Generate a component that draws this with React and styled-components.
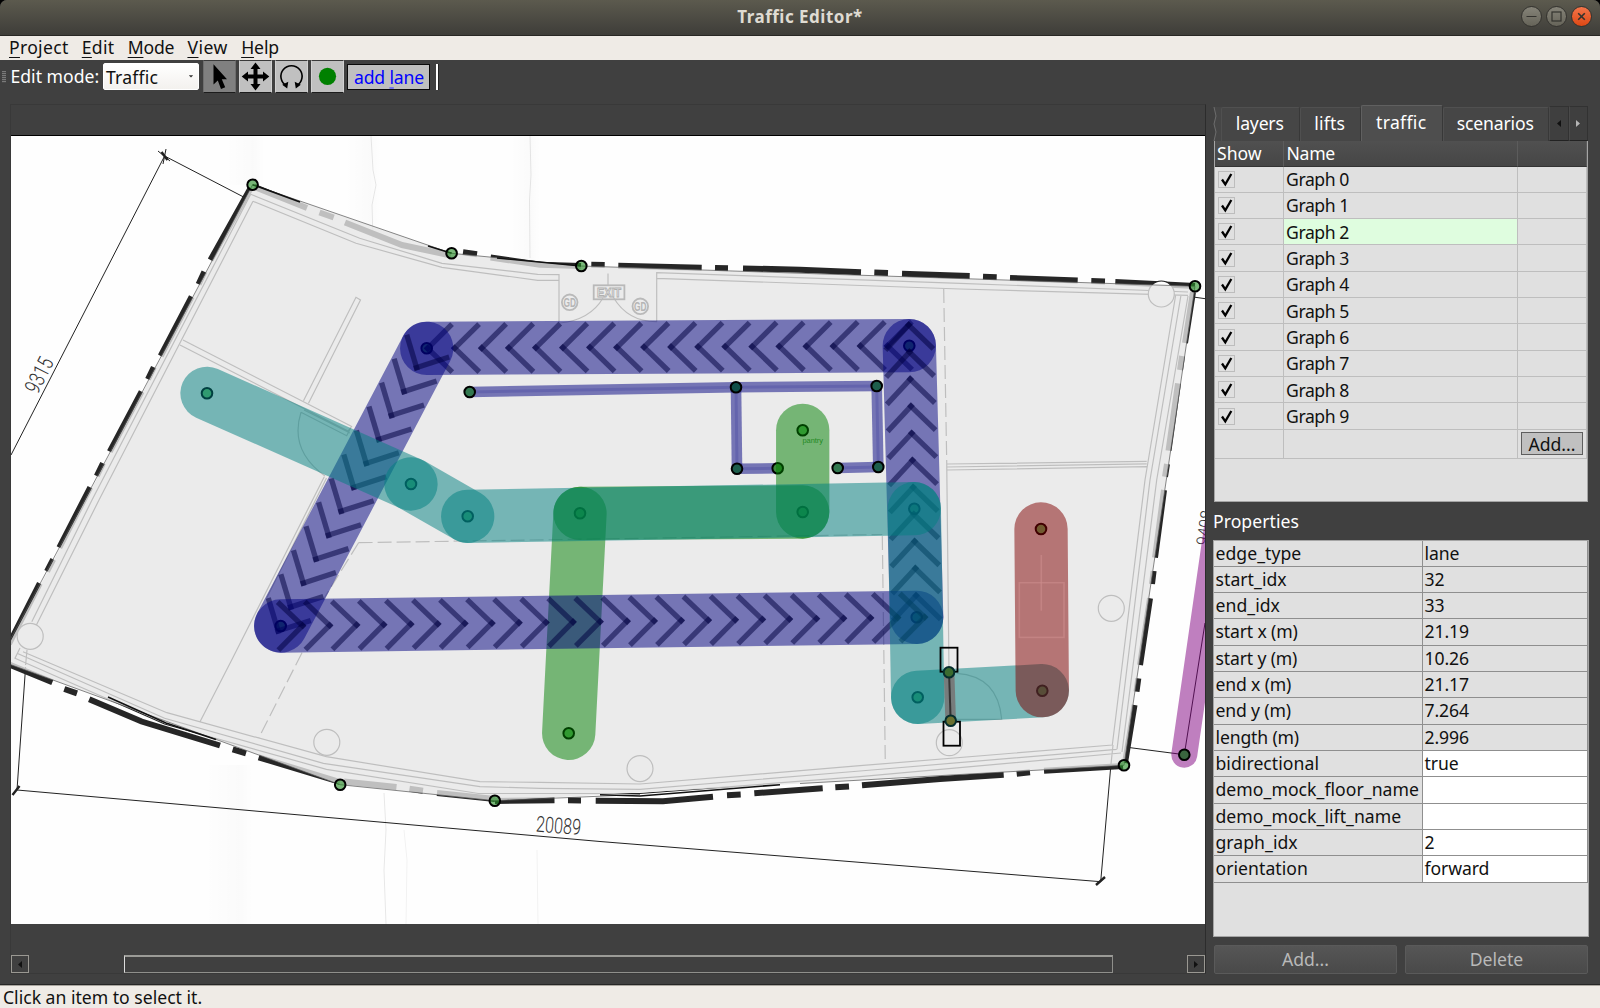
import React from "react";
import styled, { createGlobalStyle } from "styled-components";

const GlobalStyle = createGlobalStyle`
  * { box-sizing: border-box; }
  body { margin: 0; background: #000; overflow: hidden; }
`;

/* ---------- window frame ---------- */

const Window = styled.div`
  width: 1600px;
  height: 1008px;
  display: flex;
  flex-direction: column;
  overflow: hidden;
  border-radius: 7px 7px 0 0;
  background: #404040;
  color: #fff;
  font-family: "Noto Sans", "Open Sans", sans-serif;
  font-size: 17.6px;
  line-height: 24px;
  white-space: nowrap;
`;

const Text = styled.span`
  letter-spacing: ${(p) => p.$ls || 0}px;
`;

const TitleBar = styled.header`
  height: 36px;
  flex: none;
  display: grid;
  grid-template-columns: 1fr auto 1fr;
  align-items: center;
  padding: 0 8px 2px 8px;
  background: linear-gradient(#5c5a4e, #3e3d39);
  border-bottom: 1px solid #282724;
`;

const Title = styled.h1`
  grid-column: 2;
  margin: 0;
  font-size: 17px;
  line-height: 24px;
  font-weight: 700;
  color: #dfdbd2;
  letter-spacing: 0.5px;
`;

const WindowButtons = styled.div`
  display: flex;
  justify-content: flex-end;
  gap: 4px;
`;

const WindowButton = styled.button`
  width: 21px;
  height: 21px;
  padding: 0;
  border: 1px solid #34332f;
  border-radius: 50%;
  display: flex;
  align-items: center;
  justify-content: center;
  background: ${(p) => (p.$close ? "linear-gradient(#f4754a, #dd4814)" : "linear-gradient(#858378, #666459)")};
`;

const MenuBar = styled.nav`
  height: 24px;
  flex: none;
  display: flex;
  gap: 13.2px;
  padding-left: 9px;
  background: #efebe6;
  color: #111;
`;

const MenuItem = styled.div`
  line-height: 22.5px;
  letter-spacing: ${(p) => p.$ls || 0}px;
  &::first-letter {
    text-decoration: underline;
    text-decoration-thickness: 1px;
    text-underline-offset: 3px;
  }
`;

const StatusBar = styled.footer`
  height: 23px;
  flex: none;
  display: flex;
  align-items: center;
  justify-content: space-between;
  padding-left: 3px;
  border-top: 1px solid #aaa69f;
  background: #efebe6;
  color: #111;
`;

/* ---------- toolbar ---------- */

const ToolBar = styled.div`
  height: 44px;
  flex: none;
  display: flex;
  align-items: flex-start;
  padding-left: 2px;
`;

const Grip = styled.div`
  width: 4px;
  height: 12px;
  margin-top: 11px;
  background: repeating-linear-gradient(#7a7a7a 0 1px, #4a4a4a 1px 2px);
`;

const ModeLabel = styled.label`
  width: 97px;
  padding: 4px 0 0 4.5px;
`;

const Combo = styled.div`
  width: 96px;
  height: 27px;
  margin-top: 3px;
  padding: 0 4px 0 2px;
  display: flex;
  align-items: center;
  justify-content: space-between;
  border: 1px solid #fff;
  border-radius: 2px;
  background: linear-gradient(#fff, #f3f1ee);
  color: #111;
`;

const Tools = styled.div`
  display: flex;
  gap: 3.3px;
  margin-left: 3.6px;
`;

const ToolButton = styled.button`
  width: 33px;
  height: 33px;
  padding: 0;
  display: flex;
  align-items: center;
  justify-content: center;
  border: 1px solid ${(p) => (p.$on ? "#6e6e6e" : "#d2d2d2")};
  border-bottom-color: #1c1c1c;
  border-top-color: #3a3a3a;
  background: ${(p) => (p.$on ? "#808080" : "#c0c0c0")};
`;

const LaneButton = styled.button`
  width: 83px;
  height: 26px;
  margin: 4px 0 0 3px;
  padding: 0;
  border: 1px solid #0b0b0b;
  background: #c0c0c0;
  color: #0000ff;
  font: inherit;
  line-height: 23px;
  letter-spacing: -0.15px;
`;

const Mnemonic = styled.u`
  text-decoration-color: #7777e8;
  text-decoration-thickness: 2px;
  text-underline-offset: 3px;
`;

const ToolSeparator = styled.div`
  width: 3px;
  height: 26px;
  margin: 4px 0 0 6px;
  background: #fff;
  border-right: 1px solid #222;
`;

/* ---------- main area ---------- */

const Main = styled.main`
  flex: 1;
  min-height: 0;
  display: flex;
  border-bottom: 1px solid #262626;
`;

const MapFrame = styled.section`
  width: 1196px;
  height: 870px;
  margin-left: 10px;
  display: flex;
  flex-direction: column;
  border: 1px solid #393939;
  border-right-color: #2c2c2c;
`;

const MapView = styled.svg`
  display: block;
  width: 1194px;
  height: 789px;
  margin-top: 30px;
  flex: none;
  background: #fff;
  border-top: 1px solid #000;
`;

const ScrollBar = styled.div`
  margin-top: 31px;
  height: 18px;
  display: flex;
  justify-content: space-between;
`;

const ScrollArrow = styled.div`
  width: 18px;
  height: 18px;
  display: flex;
  align-items: center;
  justify-content: center;
  border: 1px solid #9a9892;
`;

const ScrollTrack = styled.div`
  flex: 1;
  padding: 0 74px 0 95px;
`;

const ScrollThumb = styled.div`
  height: 18px;
  border: 1px solid #8f8f8b;
  border-top: 2px solid #9b9b97;
  border-left-color: #ddd;
`;

const Side = styled.aside`
  width: 376px;
  margin-left: 7px;
  display: flex;
  flex-direction: column;
`;

const Tabs = styled.div`
  height: 37px;
  padding-top: 1px;
  display: flex;
  align-items: flex-end;
`;

const TornEdge = styled.svg`
  width: 8px;
  height: 34px;
  flex: none;
`;

const Tab = styled.div`
  width: ${(p) => p.$w}px;
  height: ${(p) => (p.$on ? 36 : 34)}px;
  flex: none;
  padding-right: 1.5px;
  text-align: center;
  line-height: ${(p) => (p.$on ? 33 : 30.5)}px;
  background: ${(p) => (p.$on ? "#4e4e4e" : "#464646")};
  border: 1px solid ${(p) => (p.$on ? "#606060" : "#505050")};
  border-bottom: 0;
  border-right-color: #383838;
  border-radius: 2px 2px 0 0;
`;

const TabScroll = styled.div`
  width: 19.5px;
  height: 35px;
  display: flex;
  align-items: center;
  justify-content: center;
  background: #3f3f3f;
  border: 1px solid #323232;
  border-left-color: #4a4a4a;
  border-bottom-color: #222;
`;

const GraphTable = styled.div`
  width: 374px;
  height: 361px;
  margin-left: 1px;
  border: 1px solid #a5a5a5;
  border-top: 0;
  background: #e0e0e0;
  color: #111;
`;

const GraphRow = styled.div`
  height: ${(p) => p.$h || 26.33}px;
  display: grid;
  grid-template-columns: 69px 234px 69px;
`;

const HeadCell = styled.div`
  padding-left: ${(p) => p.$pl}px;
  line-height: 24px;
  color: #fff;
  background: linear-gradient(#505050, #464646);
  border-right: 1px solid #5c5c5c;
  border-bottom: 1px solid #333;
  letter-spacing: ${(p) => p.$ls || 0}px;
`;

const GraphCell = styled.div`
  display: flex;
  align-items: center;
  padding-left: ${(p) => p.$pl ?? 2}px;
  line-height: 24px;
  letter-spacing: -0.42px;
  background: ${(p) => (p.$on ? "#dffddf" : "#e0e0e0")};
  border-right: 1px solid #bebebe;
  border-bottom: 1px solid #bebebe;
`;

const CheckBox = styled.span`
  width: 17px;
  height: 17px;
  display: flex;
  border: 1px solid #bdbdbd;
`;

const AddGraph = styled.button`
  width: 62px;
  height: 23px;
  padding: 0;
  border: 1px solid #5e5e5e;
  background: #c0c0c0;
  color: #111;
  font: inherit;
  line-height: 20px;
`;

const SectionLabel = styled.h2`
  margin: 0;
  height: 37.5px;
  line-height: 38px;
  font-size: inherit;
  font-weight: 400;
`;

const PropTable = styled.div`
  width: 376px;
  height: 397.5px;
  border: 1px solid #a5a5a5;
  background: #e0e0e0;
  color: #111;
`;

const PropRow = styled.div`
  height: 26.33px;
  display: grid;
  grid-template-columns: 209px 165px;
`;

const PropCell = styled.div`
  padding-left: 1.5px;
  line-height: 24px;
  background: ${(p) => (p.$edit ? "#fff" : "#e0e0e0")};
  border-right: 1px solid #8f8f8f;
  border-bottom: 1px solid #8f8f8f;
  letter-spacing: ${(p) => p.$ls || 0}px;
`;

const PropButtons = styled.div`
  display: flex;
  gap: 8px;
  padding: 8px 1px 0;
`;

const PropButton = styled.button`
  flex: 1;
  height: 29px;
  padding: 0 0 2px;
  border: 1px solid #5a5a5a;
  border-radius: 2px;
  background: linear-gradient(#565656, #494949);
  color: #b9b9b9;
  font: inherit;
  line-height: 24px;
`;

/* ---------- map data ---------- */

const NAVY = "rgb(0,0,128)";
const TEAL = "rgb(0,128,128)";
const GREEN = "rgb(0,128,0)";
const RED = "rgb(128,0,0)";
const PURPLE = "rgb(128,0,128)";

const A = [426.7, 348.3];
const B = [909.3, 345.7];
const C = [916.7, 617.3];
const D = [280.7, 626];
const T1 = [207, 393.3];
const T2 = [411, 484];
const T3 = [467.7, 516.3];
const T4 = [914.3, 508.7];
const T5 = [917.7, 697.3];
const E = [1042.3, 690.7];
const R1 = [1041, 529];
const G1 = [568.7, 733.3];
const G2 = [580, 513.3];
const G3 = [802.7, 512];
const G4 = [802.7, 430.3];
const P1 = [1184.3, 754.7];
const P2 = [1227.5, 454.7];

const lanes = [
  { from: G1, to: G2, color: GREEN },
  { from: G2, to: G3, color: GREEN },
  { from: G3, to: G4, color: GREEN },
  { from: B, to: A, color: NAVY, arrows: true },
  { from: C, to: B, color: NAVY, arrows: true },
  { from: A, to: D, color: NAVY, arrows: true },
  { from: D, to: C, color: NAVY, arrows: true },
  { from: T1, to: T2, color: TEAL },
  { from: T2, to: T3, color: TEAL },
  { from: T3, to: T4, color: TEAL },
  { from: T4, to: T5, color: TEAL },
  { from: T5, to: E, color: TEAL },
  { from: R1, to: E, color: RED },
  { from: P1, to: P2, color: PURPLE, width: 26 },
];

const W = [
  [469.7, 392],
  [736, 387.3],
  [876.7, 386],
  [878.3, 467],
  [837.7, 468],
  [737, 468.7],
  [777.7, 468.3],
];
const walls = [
  [W[0], W[1]],
  [W[1], W[2]],
  [W[2], W[3]],
  [W[3], W[4]],
  [W[1], W[5]],
  [W[5], W[6]],
];

const corners = [
  [252.6, 184.7],
  [451.6, 253.3],
  [581.3, 266],
  [1195, 286.3],
  [1124, 765.3],
  [494.8, 800.7],
  [340.2, 784.7],
];

const vertices = [
  ...corners.map((p) => [p, "rgba(38,140,38,.62)"]),
  [W[0], "#32784f"],
  [W[1], "#0f4f48"],
  [W[2], "#1d5e4c"],
  [W[3], "#1d5e4c"],
  [W[4], "#32784f"],
  [W[5], "#1d5e4c"],
  [W[6], "#3c8a3c"],
  ...[A, B, C, D].map((p) => [p, "#3c963c"]),
  ...[T1, T2, T3, T4, T5, G1, G2, G3, G4, R1, E].map((p) => [p, "#60b460"]),
];

const boundary = [
  "M250.7 188L210.5 260", "M204.4 271.7L198.6 284.3", "M191.7 296.7L160.7 356", "M153.8 367.3L148 379.3",
  "M141.6 391.7L109.8 451.7", "M103 463.3L96.8 476", "M90.3 487.3L59.3 547.7", "M53.2 559.3L47 571.3", "M39.8 583.3L9 644",
  "M254.5 187L307 208", "M319.5 212.5L333.7 217.5", "M345 222.5L402 245L451 255.5", "M463 252.3L477 254.3",
  "M490.6 257.5L540 264.8L581 266", "M591.3 264.7L604.7 264.9", "M618.3 265.7L701.7 267.7", "M715 267.9L728 268.2",
  "M743 268.4L800 269.7L861 272.3", "M874.3 272.5L888 273", "M902 273.8L969.7 276", "M983 276.7L996.7 277.2",
  "M1010 277.9L1077.7 280.5", "M1091.3 281L1105 281.4", "M1115.3 282L1195 285.9",
  "M1193 292L1185 343", "M1182 356L1180 370", "M1178 383.3L1168.5 450.7", "M1167 464L1165 476.7",
  "M1164 490L1155 557.7", "M1153.6 571L1152 584", "M1150 598.3L1140 665", "M1138.3 678.3L1136.5 691.7", "M1134.5 705L1125 763",
  "M1123 766L1044 770.8", "M1030 772.3L1016.7 773.7", "M1003.7 774.7L940 779L862 785.3", "M849 786.4L835.3 787.3",
  "M822.7 788.2L754.3 793.3", "M740.7 794.6L727 795.3", "M713 796.8L663 801.3L595.7 800.8", "M581 800.4L568 800.3",
  "M554.5 800.3L495 801", "M495 799L437 793", "M423 790.7L409.5 788.7", "M396.5 787L344 781.5",
  "M340 782L258.7 757.3", "M246 753.3L232.7 749.3", "M220 745.5L141.6 721.5L89.2 699.3", "M77 693.3L64.3 689", "M52.4 682.3L9 664.5",
].join("");

const thinWalls = [
  "M250.7 194.3L359.7 238.3L442 263.3L537.7 274.3L559 274.7V323",
  "M253 201.3L356 243.3L442 267.3L537.7 280.3H559",
  "M250.7 194.3L92 500L31.8 621.7", "M253 201.3L99 500L36.4 625",
  "M183 340L351.3 426.3", "M180 345L348 431L352 426", "M301 412.3L346.7 435.7L350.7 428", "M304 410L350 433",
  "M301 412.3Q289 450 325 476",
  "M303.5 400.7L356 297.3L360.5 300L308.5 403.3",
  "M324.3 476.7L231.7 660L200 721.7", "M326.5 478L266.7 598",
  "M656.7 321.7V272.7L960 283.3L1188 292", "M656.7 278.3L960 289L1188 295.3",
  "M1175.7 295L1145 480L1112.3 745", "M1181 295L1150 480L1117 749.3", "M1188 296L1156.7 480L1122 752",
  "M946.7 464L1146.7 461.3", "M946.7 467L1146.7 463.8", "M946.7 470L1146.7 466.7", "M946.7 460L949 672",
  "M1112.3 745L860 765.7L640 784L540 782.3L480 781.7L326.4 756.7L166.9 712.7L23 651.7",
  "M1116.7 749.3L860 771L640 789.3L540 788.3L480 786.7L323.4 763.3L164.6 718.3L17 653.3",
  "M1121 753L860 776.7L640 793.5H478.4L326.4 769.3L164.6 724L15 658.3L20 648",
  "M603 298Q590 320 560 323", "M613.3 297.3Q628 322 657 321.7", "M608 273.5V285",
  "M956.7 673.3Q998 676 1001.7 719.3H955",
  "M25.6 665L27 650", "M1110.7 767L1113 745",
].join("");

const dashedWalls = ["M943.7 289L946.7 460", "M358.6 542.7L882.3 534.5", "M882.3 536L885.3 763", "M358.6 542.7L323 600", "M302 652.7L258.7 738"].join("");

const columns = [
  [30.2, 636.3],
  [326.8, 742.3],
  [640, 768.6],
  [949.3, 742.7],
  [1111.3, 608.3],
  [1161.3, 294],
];

const dimensionLines = [
  "M11 455L164.6 156L243 196.7", "M158 151L170 161", "M166 149L163 164",
  "M25.6 667L17 790L600 841.5L1100.7 881.7L1110.7 767.3",
  "M1125 747L1184.3 754.7L1205 623", "M1193.3 297L1206 298.8",
].join("");

function Lane({ from, to, color, width = 53.3, arrows }) {
  const dx = to[0] - from[0];
  const dy = to[1] - from[1];
  const len = Math.hypot(dx, dy);
  const angle = (Math.atan2(dy, dx) * 180) / Math.PI;
  const count = arrows ? Math.floor(len / 27) + 1 : 0;
  return (
    <g transform={`translate(${from[0]} ${from[1]}) rotate(${angle})`}>
      <line x2={len} stroke={color} strokeOpacity=".5" strokeWidth={width} strokeLinecap="round" />
      {Array.from({ length: count }, (_, i) => 21.8 + i * 27.05).map((x) => (
        <g key={x} stroke="rgb(0,0,64)" strokeOpacity=".52" strokeWidth="5.3">
          <path d={`M${x + 2} 2L${x - 24.5} -24`} />
          <path d={`M${x + 2} -2L${x - 24.5} 24`} />
        </g>
      ))}
    </g>
  );
}

function Vertex({ at, fill, stroke = "#000" }) {
  return <circle cx={at[0]} cy={at[1]} r="5.3" fill={fill} stroke={stroke} strokeWidth="2" />;
}

function Sign({ x, y }) {
  return (
    <g stroke="#b9b9b9" strokeWidth="1.8" fill="none">
      <circle cx={x} cy={y} r="7.8" />
      <text x={x} y={y + 4.8} textAnchor="middle" fontFamily="Liberation Sans, sans-serif" fontSize="13.5" fontWeight="700" stroke="none" fill="#b5b5b5" textLength="12.5" lengthAdjust="spacingAndGlyphs">
        GD
      </text>
    </g>
  );
}

function FloorMap() {
  return (
    <MapView viewBox="11 136 1194 788" preserveAspectRatio="none">
      <defs>
        <linearGradient id="fold">
          <stop offset="0" stopColor="#000" stopOpacity="0" />
          <stop offset=".7" stopColor="#000" stopOpacity=".015" />
          <stop offset="1" stopColor="#000" stopOpacity="0" />
        </linearGradient>
      </defs>
      <rect x="11" y="135" width="1194" height="790" fill="#fefefe" />
      <rect x="205" y="765" width="48" height="160" fill="url(#fold)" />
      <rect x="225" y="135" width="40" height="50" fill="url(#fold)" />
      <rect x="345" y="135" width="36" height="90" fill="url(#fold)" />
      <rect x="510" y="135" width="30" height="125" fill="url(#fold)" />
      <g stroke="#000" strokeOpacity=".09" fill="none">
        <path d="M371 136L373 170L376 185L372 205L373 240" />
        <path d="M530 136L531 175L529.5 200L530 258" />
        <path d="M384 793L386 830L384 870L386 924" />
        <path d="M404 830L407 860L406 924" strokeOpacity=".05" />
        <path d="M537 850L538 924" strokeOpacity=".05" />
      </g>

      <path d={dimensionLines} fill="none" stroke="#222" strokeWidth="1" />
      <path d="M12.5 795L19.5 786M1096 885L1105 877M161.5 152L167.5 160" stroke="#222" strokeWidth="2.4" />
      <g fontFamily="Roboto, sans-serif" fontWeight="300" fontSize="22" fill="#333">
        <text transform="translate(37.5 395) rotate(-63)" textLength="37" lengthAdjust="spacingAndGlyphs">9315</text>
        <text transform="translate(535.5 831.5) rotate(4.5)" textLength="45" lengthAdjust="spacingAndGlyphs">20089</text>
        <text transform="translate(1208 546) rotate(-82)" fontSize="17" textLength="35" lengthAdjust="spacingAndGlyphs">9408</text>
      </g>

      <path d={boundary} fill="none" stroke="#262626" strokeWidth="6" />
      <path d={thinWalls} fill="none" stroke="#222" strokeWidth="1.2" />
      <path d={dashedWalls} fill="none" stroke="#222" strokeWidth="1.2" strokeDasharray="14 5" />
      {columns.map(([x, y]) => (
        <circle key={x} cx={x} cy={y} r="13" fill="#fff" stroke="#222" strokeWidth="1.2" />
      ))}

      <polygon points="252.6,184.7 451.6,253.3 581.3,266 1195,286.3 1124,765.3 494.8,800.7 340.2,784.7 -10,657 -2,665" fill="rgb(230,230,230)" fillOpacity=".8" />
      <path
        d="M9 642L252.6 184.7L451.6 253.3L581.3 266L1195 286.3L1124 765.3L800 783.5M640 794.5L494.8 800.7L340.2 784.7L9 664"
        fill="none"
        stroke="#555"
        strokeWidth=".7"
      />
      <path d="M252.6 184.7L300 202M428 246L451.6 253.3M497 258L581 266" fill="none" stroke="#111" strokeWidth="1.6" />
      <path d="M600 794.7L640 796L780 784.7M108 697L166 723L216 739.5" fill="none" stroke="#111" strokeWidth="1.6" />

      <rect x="593.7" y="285.3" width="30.7" height="14" fill="none" stroke="#b9b9b9" strokeWidth="1.8" />
      <text x="597" y="297" fontFamily="Liberation Sans, sans-serif" fontSize="12.5" fontWeight="700" fill="none" stroke="#b0b0b0" strokeWidth=".9" textLength="24" lengthAdjust="spacingAndGlyphs">
        EXIT
      </text>
      <Sign x={569.7} y={302.3} />
      <Sign x={640.3} y={306.3} />

      {walls.map(([a, b]) => (
        <g key={`${a}-${b}`} stroke={NAVY} strokeOpacity=".5">
          <path d={`M${a}L${b}`} strokeWidth="10.6" />
          <path d={`M${a}L${b}`} strokeWidth="3" strokeOpacity=".14" />
        </g>
      ))}

      {vertices.map(([at, fill]) => (
        <Vertex key={`${at}`} at={at} fill={fill} />
      ))}

      {lanes.map((lane) => (
        <Lane key={`${lane.from}-${lane.to}`} {...lane} />
      ))}

      <g fill="none" stroke="#000">
        <path d="M949.1 674L950.6 719" stroke="#777" strokeOpacity=".92" strokeWidth="10.6" />
        <path d="M949.1 674L950.6 719" stroke="#333" strokeWidth="2" />
        <rect x="940.5" y="647.7" width="17" height="24" strokeWidth="1.8" />
        <rect x="943.5" y="721.7" width="16.5" height="24" strokeWidth="1.8" />
      </g>
      <Vertex at={[949, 672.3]} fill="#3b6b30" stroke="#052d2d" />
      <Vertex at={[950.7, 720.7]} fill="#6a7030" stroke="#052d2d" />
      <Vertex at={P1} fill="#3a643f" />

      <g fill="none" stroke="rgb(205,140,140)" strokeOpacity=".6" strokeWidth="1.6">
        <rect x="1019.3" y="582.7" width="44.7" height="54.7" />
        <path d="M1041.3 555V610.7" />
      </g>
      <text x="802.5" y="442.7" fontFamily="Liberation Sans, sans-serif" fontSize="7.5" fill="#238a23" textLength="20.5">
        pantry
      </text>
    </MapView>
  );
}

/* ---------- icons ---------- */

const PointerIcon = () => (
  <svg width="31" height="31" viewBox="0 0 31 31">
    <path d="M9.5 3.2V23.5L13.8 19.6L17 28L21.2 26.3L17.8 18.2H23Z" fill="#000" />
  </svg>
);
const MoveIcon = () => (
  <svg width="31" height="31" viewBox="0 0 31 31">
    <path d="M15.5 1.5L20.5 8H17.5V13.5H23V10.5L29.3 15.5L23 20.5V17.5H17.5V23H20.5L15.5 29.5L10.5 23H13.5V17.5H8V20.5L1.7 15.5L8 10.5V13.5H13.5V8H10.5Z" fill="#000" />
  </svg>
);
const RotateIcon = () => (
  <svg width="31" height="31" viewBox="0 0 31 31">
    <path d="M10.2 24.5A10.6 10.6 0 1 1 20.8 24.5" fill="none" stroke="#000" strokeWidth="1.6" />
    <path d="M6.2 23.8L12.3 20.8L11.2 27.4ZM24.8 23.8L18.7 20.8L19.8 27.4Z" fill="#000" />
  </svg>
);
const DotIcon = () => (
  <svg width="31" height="31" viewBox="0 0 31 31">
    <circle cx="15.5" cy="15.3" r="8.6" fill="#008000" />
  </svg>
);
const Arrow = ({ dir, color }) => (
  <svg width="6" height="7" viewBox="0 0 6 7">
    <path d={{ left: "M5 0V7L1 3.5Z", right: "M1 0V7L5 3.5Z", down: "M.8 2.2H5.2L3 4.6Z" }[dir]} fill={color} />
  </svg>
);
const Tick = () => (
  <svg width="15" height="15" viewBox="0 0 15 15">
    <path d="M3 7.5L6.3 12.4L12.3 2" fill="none" stroke="#000" strokeWidth="2.3" />
  </svg>
);

/* ---------- content ---------- */

const menus = [["Project", 0.3], ["Edit", 0.3], ["Mode", -0.2], ["View", 0.5], ["Help", -0.1]];

const properties = [
  ["edge_type", "lane"],
  ["start_idx", "32"],
  ["end_idx", "33"],
  ["start x (m)", "21.19"],
  ["start y (m)", "10.26"],
  ["end x (m)", "21.17"],
  ["end y (m)", "7.264"],
  ["length (m)", "2.996"],
  ["bidirectional", "true", true],
  ["demo_mock_floor_name", "", true],
  ["demo_mock_lift_name", "", true],
  ["graph_idx", "2", true],
  ["orientation", "forward", true],
];

export default function App() {
  return (
    <Window>
      <GlobalStyle />
      <TitleBar>
        <Title>Traffic Editor*</Title>
        <WindowButtons>
          <WindowButton>
            <svg width="11" height="11"><path d="M.5 5.5H10.5" stroke="#33322e" strokeWidth="1.2" /></svg>
          </WindowButton>
          <WindowButton>
            <svg width="11" height="11"><rect x="1" y="1" width="9" height="9" fill="none" stroke="#33322e" strokeWidth="1.2" /></svg>
          </WindowButton>
          <WindowButton $close>
            <svg width="9" height="9"><path d="M1.2 1.2L7.8 7.8M7.8 1.2L1.2 7.8" stroke="#33322e" strokeWidth="1.6" /></svg>
          </WindowButton>
        </WindowButtons>
      </TitleBar>

      <MenuBar>
        {menus.map(([name, ls]) => (
          <MenuItem key={name} $ls={ls}>{name}</MenuItem>
        ))}
      </MenuBar>

      <ToolBar>
        <Grip />
        <ModeLabel><Text $ls={0}>Edit mode:</Text></ModeLabel>
        <Combo>
          <Text $ls={0.2}>Traffic</Text>
          <Arrow dir="down" color="#333" />
        </Combo>
        <Tools>
          <ToolButton $on><PointerIcon /></ToolButton>
          <ToolButton><MoveIcon /></ToolButton>
          <ToolButton><RotateIcon /></ToolButton>
          <ToolButton><DotIcon /></ToolButton>
        </Tools>
        <LaneButton>add <Mnemonic>l</Mnemonic>ane</LaneButton>
        <ToolSeparator />
      </ToolBar>

      <Main>
        <MapFrame>
          <FloorMap />
          <ScrollBar>
            <ScrollArrow><Arrow dir="left" color="#111" /></ScrollArrow>
            <ScrollTrack><ScrollThumb /></ScrollTrack>
            <ScrollArrow><Arrow dir="right" color="#111" /></ScrollArrow>
          </ScrollBar>
        </MapFrame>

        <Side>
          <Tabs>
            <TornEdge viewBox="0 0 8 34">
              <path d="M1 0L3 9L1 17L3 25L1 34H8V0Z" fill="#464646" />
              <path d="M1 0L3 9L1 17L3 25L1 34" fill="none" stroke="#6e6e6e" />
            </TornEdge>
            <Tab $w={79}><Text $ls={-0.2}>layers</Text></Tab>
            <Tab $w={61}><Text $ls={0.2}>lifts</Text></Tab>
            <Tab $w={82} $on><Text $ls={0.3}>traffic</Text></Tab>
            <Tab $w={106}><Text $ls={-0.15}>scenarios</Text></Tab>
            <TabScroll><Arrow dir="left" color="#111" /></TabScroll>
            <TabScroll><Arrow dir="right" color="#b5b5b5" /></TabScroll>
          </Tabs>

          <GraphTable>
            <GraphRow $h={25.5}>
              <HeadCell $pl={2}>Show</HeadCell>
              <HeadCell $pl={2.5} $ls={-0.3}>Name</HeadCell>
              <HeadCell $pl={0} />
            </GraphRow>
            {Array.from({ length: 10 }, (_, i) => (
              <GraphRow key={i}>
                <GraphCell $pl={3}><CheckBox><Tick /></CheckBox></GraphCell>
                <GraphCell $on={i === 2}>Graph {i}</GraphCell>
                <GraphCell />
              </GraphRow>
            ))}
            <GraphRow $h={29}>
              <GraphCell />
              <GraphCell />
              <GraphCell $pl={3}><AddGraph>Add...</AddGraph></GraphCell>
            </GraphRow>
          </GraphTable>

          <SectionLabel><Text $ls={0.05}>Properties</Text></SectionLabel>

          <PropTable>
            {properties.map(([name, value, editable]) => (
              <PropRow key={name}>
                <PropCell $ls={name.includes("(m)") ? -0.15 : 0.05}>{name}</PropCell>
                <PropCell $edit={editable} $ls={-0.1}>{value}</PropCell>
              </PropRow>
            ))}
          </PropTable>

          <PropButtons>
            <PropButton>Add...</PropButton>
            <PropButton>Delete</PropButton>
          </PropButtons>
        </Side>
      </Main>

      <StatusBar>
        <Text>Click an item to select it.</Text>
      </StatusBar>
    </Window>
  );
}
